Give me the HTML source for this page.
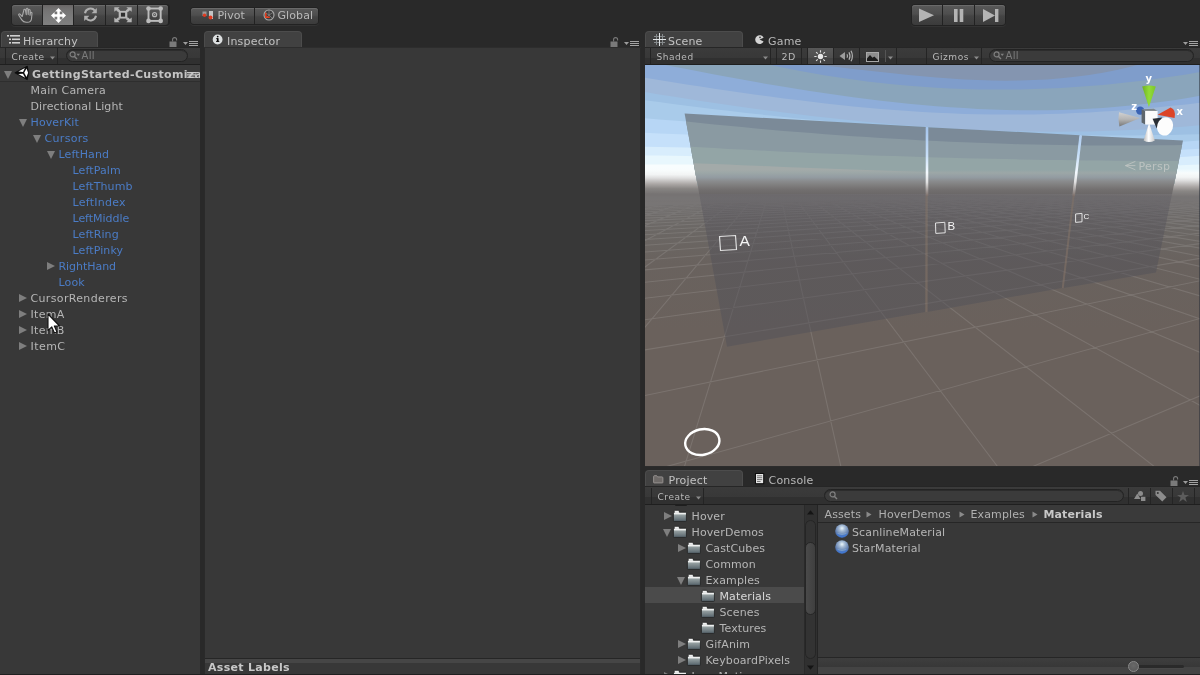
<!DOCTYPE html>
<html>
<head>
<meta charset="utf-8">
<title>Unity Editor</title>
<style>
*{box-sizing:border-box;margin:0;padding:0}
html,body{width:1200px;height:675px;overflow:hidden;background:#292929}
body{font-family:"DejaVu Sans","Liberation Sans",sans-serif;font-size:11px;color:#b6b6b6;position:relative;letter-spacing:0.12px}
.abs{position:absolute}
svg{position:absolute;overflow:visible}
.panel{position:absolute;background:#383838}
.tab{position:absolute;height:17px;background:#414141;border:1px solid #4c4c4c;border-bottom:none;border-radius:4px 4px 0 0}
.tl{position:absolute;font-size:11px;line-height:16px;height:16px;color:#c2c2c2;white-space:nowrap;letter-spacing:0.2px}
.tbar{position:absolute;height:18px;background:linear-gradient(#3b3b3b 0,#383838 60%,#303030 61%,#303030 100%);border-top:1px solid #262626;border-bottom:1px solid #1f1f1f}
.tt{position:absolute;font-size:9px;line-height:12px;height:12px;color:#b9b9b9;white-space:nowrap;letter-spacing:0.55px}
.sep{position:absolute;width:1px;background:#242424}
.t{position:absolute;white-space:nowrap;line-height:16px;height:16px}
.b{color:#4b7cc6}
.bold{font-weight:bold}
.search{position:absolute;height:13px;border-radius:7px;background:#3b3b3b;border:1px solid #232323;box-shadow:inset 0 1px 0 #2c2c2c}
.tri-d{position:absolute;width:0;height:0;border-left:4.5px solid transparent;border-right:4.5px solid transparent;border-top:8px solid #7e7e7e}
.tri-r{position:absolute;width:0;height:0;border-top:4.5px solid transparent;border-bottom:4.5px solid transparent;border-left:8px solid #7e7e7e}
.btng{position:absolute;border-radius:4px;background:#222222;box-shadow:0 1px 0 #333}
.btn{position:absolute;top:1px;bottom:1px;background:linear-gradient(#595959 0,#4e4e4e 45%,#444444 55%,#3b3b3b 100%);box-shadow:inset 0 1px 0 #6a6a6a}
.btn.on{background:linear-gradient(#6a6767 0,#737272 20%,#797979 50%,#808080 100%);box-shadow:none}

#root{position:absolute;left:0;top:0;width:1200px;height:675px;will-change:transform;transform:translateZ(0)}

#bline{position:absolute;left:0;top:674px;width:1200px;height:1px;background:#202020}

</style>
</head>
<body>
<div id="root">
<div class="btng" style="left:11px;top:4px;width:159px;height:22px">
<div class="btn" style="left:1px;width:30px;border-radius:3px 0 0 3px;"></div>
<div class="btn on" style="left:32px;width:30px;"></div>
<div class="btn" style="left:63px;width:31px;"></div>
<div class="btn" style="left:95px;width:31px;"></div>
<div class="btn" style="left:127px;width:30px;border-radius:0 3px 3px 0;"></div>
</div>
<svg style="left:17px;top:6px" width="18" height="18" viewBox="0 0 18 18"><path d="M5.2 10.5 3 8.2c-.7-.7-1.8.2-1.2 1.1l3 4.6c1 1.6 2.3 2.4 4.3 2.4h1.4c2.3 0 3.8-1.6 4-3.6l.5-5.400c.1-1.100-1.400-1.300-1.600-.2l-.4 2.200.2-5c0-1.100-1.600-1.200-1.700-.1l-.3 4.300-.3-5.400c-.1-1.100-1.700-1-1.700.1l.1 5.400-.9-4.600c-.2-1.100-1.800-.8-1.600.3z" fill="none" stroke="#a8a8a8" stroke-width="1.1" stroke-linejoin="round"/></svg>
<svg style="left:50.800px;top:7.700px" width="15" height="15" viewBox="0 0 15 15"><path d="M7.500 0 10.900 3.600H8.750V6.250H11.400V4.100L15 7.500 11.400 10.900V8.750H8.750V11.400H10.900L7.500 15 4.100 11.400H6.250V8.750H3.600V10.900L0 7.500 3.600 4.100V6.250H6.250V3.600H4.100z" fill="#ffffff"/></svg>
<svg style="left:83px;top:7px" width="15" height="15" viewBox="0 0 15 15"><path d="M2 6.200A5.600 5.600 0 0 1 11.800 3.600" fill="none" stroke="#b0b0b0" stroke-width="2"/><path d="M13.800 1V6.200H8.600z" fill="#b0b0b0"/><path d="M13 8.800A5.600 5.600 0 0 1 3.200 11.400" fill="none" stroke="#b0b0b0" stroke-width="2"/><path d="M1.200 14V8.800H6.400z" fill="#b0b0b0"/></svg>
<svg style="left:113.500px;top:7px" width="18" height="15.400" viewBox="0 0 18 18" preserveAspectRatio="none"><rect x="5.800" y="5.600" width="6.400" height="6.800" fill="#2e2e2e" stroke="#b8b8b8" stroke-width="2.200"/><g fill="#b4b4b4"><path d="M0.300 0.300h5.400L4.100 1.900 6.300 4.100 4.300 6.100 2.100 3.900 0.300 5.700z"/><path d="M17.700 0.300v5.400L15.900 3.900 13.700 6.100 11.700 4.100 13.900 1.900 12.300 0.300z"/><path d="M0.300 17.700v-5.400L2.100 14.100 4.300 11.900 6.300 13.900 4.100 16.100 5.700 17.700z"/><path d="M17.700 17.700h-5.400L13.900 16.100 11.700 13.900 13.700 11.900 15.900 14.100 17.700 12.300z"/></g></svg>
<svg style="left:145.800px;top:5.800px" width="17.200" height="17.400" viewBox="0 0 17.200 17.400"><rect x="2.500" y="2.500" width="12.200" height="12.400" fill="none" stroke="#bcbcbc" stroke-width="1.900"/><g fill="#bcbcbc"><circle cx="2.500" cy="2.500" r="2.300"/><circle cx="14.700" cy="2.500" r="2.300"/><circle cx="2.500" cy="14.900" r="2.300"/><circle cx="14.700" cy="14.900" r="2.300"/></g><circle cx="8.600" cy="8.700" r="2" fill="none" stroke="#b4b4b4" stroke-width="1.300"/><circle cx="8.600" cy="8.700" r="0.600" fill="#b4b4b4"/></svg>
<div class="btng" style="left:190px;top:7px;width:129px;height:18px">
<div class="btn" style="left:1px;width:63px;border-radius:3px 0 0 3px"></div>
<div class="btn" style="left:65px;width:63px;border-radius:0 3px 3px 0"></div>
</div>
<svg style="left:202px;top:11px" width="12" height="9" viewBox="0 0 12 9"><rect x="0.500" y="0.500" width="4" height="4.500" fill="#9a9a9a"/><rect x="7" y="0" width="4" height="8" fill="#c4c4c4"/><circle cx="2.500" cy="4.300" r="1.700" fill="#e03a20"/><circle cx="8.500" cy="6.500" r="2" fill="#e03a20"/></svg>
<div class="t" style="left:217.500px;top:8px;color:#b9b9b9;letter-spacing:0.1px">Pivot</div>
<svg style="left:263px;top:9px" width="12" height="12" viewBox="0 0 12 12"><circle cx="6" cy="6" r="5" fill="#3c3c3c" stroke="#a8a8a8" stroke-width="1.100"/><path d="M6 1.500V6M2 3.500 6 6 10 3.500M3 9 6 6 9 9" stroke="#8a8a8a" stroke-width="0.700" fill="none"/><path d="M2.800 3.800V8.300H6.800" stroke="#e8401e" stroke-width="1.500" fill="none"/></svg>
<div class="t" style="left:277.500px;top:8px;color:#b9b9b9;letter-spacing:0.1px">Global</div>
<div class="btng" style="left:911px;top:4px;width:95px;height:22px">
<div class="btn" style="left:1px;width:30px;border-radius:3px 0 0 3px"></div>
<div class="btn" style="left:32px;width:31px"></div>
<div class="btn" style="left:64px;width:30px;border-radius:0 3px 3px 0"></div>
</div>
<svg style="left:911px;top:4px" width="95" height="22" viewBox="0 0 95 22"><g fill="#b4b4b4"><path d="M8 4.500V18L23 11.200z"/><rect x="43" y="5" width="3.600" height="13"/><rect x="48.700" y="5" width="3.600" height="13"/><path d="M72 5V18L84 11.500z"/><rect x="84" y="5" width="3.400" height="13"/></g></svg>
<div class="panel" style="left:0;top:47px;width:200px;height:628px"></div>
<div class="tab" style="left:1px;top:31px;width:97px"></div>
<svg style="left:7px;top:35px" width="13" height="9" viewBox="0 0 13 9"><g fill="#d0d0d0"><rect x="0" y="0" width="2" height="1.600"/><rect x="3" y="0" width="10" height="1.600"/><rect x="2" y="3.500" width="2" height="1.600"/><rect x="5" y="3.500" width="8" height="1.600"/><rect x="2" y="7" width="2" height="1.600"/><rect x="5" y="7" width="8" height="1.600"/></g></svg>
<div class="tl" style="left:23px;top:34px">Hierarchy</div>
<svg style="left:169px;top:37px" width="9" height="10" viewBox="0 0 9 10"><rect x="0.5" y="4.5" width="7" height="5.5" fill="#7a7a7a"/><path d="M3.6 4.6V2.6a2 2 0 0 1 4 0V3.4" fill="none" stroke="#7a7a7a" stroke-width="1.1"/></svg>
<svg style="left:183px;top:41px" width="15" height="5" viewBox="0 0 15 5" shape-rendering="crispEdges"><path d="M0 1h5l-2.500 3z" fill="#9c9c9c" shape-rendering="geometricPrecision"/><rect x="6" y="0" width="8.500" height="1" fill="#a4a4a4"/><rect x="6" y="2" width="8.500" height="1" fill="#a4a4a4"/><rect x="6" y="4" width="8.500" height="1" fill="#a4a4a4"/></svg>
<div class="tbar" style="left:0;top:47px;width:200px"></div>
<div class="sep" style="left:5px;top:48px;height:16px"></div>
<div class="tt" style="left:11.500px;top:50.500px">Create</div>
<svg style="left:49.500px;top:55.500px" width="5" height="4" viewBox="0 0 5 4"><path d="M0 0.500h5L2.500 3.500z" fill="#8a8a8a"/></svg>
<div class="sep" style="left:57px;top:48px;height:16px"></div>
<div class="search" style="left:65.500px;top:49px;width:122px"></div>
<svg style="left:69px;top:51px" width="12" height="9" viewBox="0 0 12 9"><circle cx="3.600" cy="3.400" r="2.500" fill="none" stroke="#808080" stroke-width="1.200"/><path d="M5.300 5.200 8 8" stroke="#808080" stroke-width="1.400"/><path d="M7.500 2.800h3.500L9.200 5z" fill="#808080"/></svg>
<div class="tt" style="left:81.500px;top:50px;color:#7c7c7c;font-size:10px;letter-spacing:0.3px">All</div>
<div class="abs" style="left:0;top:65px;width:200px;height:17px;background:#3a3a3a;border-bottom:1px solid #2e2e2e"></div>
<div class="tri-d" style="left:4px;top:70.5px"></div>
<svg style="left:14px;top:65px" width="16" height="16" viewBox="0 0 16 16"><path d="M0.800 7.800 13.300 1.100Q15.600 7.800 13.300 14.700z" fill="#0c0c0c" stroke="#0c0c0c" stroke-width="0.800" stroke-linejoin="round"/><path d="M4.300 6.600 10.900 3 9 7z" fill="#fff"/><path d="M4.300 9.100 9 8.700 11.100 12.800z" fill="#fff"/><path d="M12.500 3.600 14.100 7.800 12.500 12.100 10.200 7.800z" fill="#fff"/></svg>
<div class="t bold" style="left:32px;top:66.500px;color:#c4c4c4;letter-spacing:0.35px;width:168px;overflow:hidden">GettingStarted-Customization</div>
<svg style="left:186.500px;top:72px" width="9" height="6" viewBox="0 0 9 6"><path d="M0 0.600h9M0 2.900h9M0 5.200h9" stroke="#c8c8c8" stroke-width="1.100"/></svg>
<div class="t" style="left:30.5px;top:83px;letter-spacing:0.24px">Main Camera</div>
<div class="t" style="left:30.5px;top:99px">Directional Light</div>
<div class="tri-d" style="left:18.5px;top:118.5px"></div>
<div class="t b" style="left:30.5px;top:115px">HoverKit</div>
<div class="tri-d" style="left:32.5px;top:134.5px"></div>
<div class="t b" style="left:44.5px;top:131px;letter-spacing:0.32px">Cursors</div>
<div class="tri-d" style="left:46.5px;top:150.5px"></div>
<div class="t b" style="left:58.5px;top:147px">LeftHand</div>
<div class="t b" style="left:72.5px;top:163px">LeftPalm</div>
<div class="t b" style="left:72.5px;top:179px">LeftThumb</div>
<div class="t b" style="left:72.5px;top:195px;letter-spacing:0.26px">LeftIndex</div>
<div class="t b" style="left:72.5px;top:211px;letter-spacing:-0.04px">LeftMiddle</div>
<div class="t b" style="left:72.5px;top:227px">LeftRing</div>
<div class="t b" style="left:72.5px;top:243px">LeftPinky</div>
<div class="tri-r" style="left:47.0px;top:261.5px"></div>
<div class="t b" style="left:58.5px;top:259px;letter-spacing:-0.05px">RightHand</div>
<div class="t b" style="left:58.5px;top:275px">Look</div>
<div class="tri-r" style="left:19.0px;top:293.5px"></div>
<div class="t" style="left:30.5px;top:291px;letter-spacing:0.35px">CursorRenderers</div>
<div class="tri-r" style="left:19.0px;top:309.5px"></div>
<div class="t" style="left:30.5px;top:307px;letter-spacing:0.3px">ItemA</div>
<div class="tri-r" style="left:19.0px;top:325.5px"></div>
<div class="t" style="left:30.5px;top:323px;letter-spacing:0.3px">ItemB</div>
<div class="tri-r" style="left:19.0px;top:341.5px"></div>
<div class="t" style="left:30.5px;top:339px;letter-spacing:0.45px">ItemC</div>
<svg style="left:47px;top:313px" width="14" height="21" viewBox="0 0 14 21"><path d="M1 1V17.500L4.800 13.900 7.500 20 10 18.900 7.300 13H12.500z" fill="#fff" stroke="#111" stroke-width="1.100" stroke-linejoin="round"/></svg>
<div class="panel" style="left:204px;top:47px;width:437px;height:628px;border-left:1px solid #2a2a2a;border-right:1px solid #2a2a2a"></div>
<div class="tab" style="left:204px;top:31px;width:98px"></div>
<svg style="left:212px;top:34px" width="11" height="11" viewBox="0 0 11 11"><circle cx="5.600" cy="5.500" r="4.900" fill="#dcdfe0"/><rect x="4.900" y="4.200" width="1.700" height="3.400" fill="#0a0a0a"/><rect x="4.200" y="4.200" width="1.800" height="0.900" fill="#0a0a0a"/><rect x="4.100" y="6.900" width="3.200" height="1" fill="#0a0a0a"/><circle cx="5.700" cy="2.600" r="0.900" fill="#0a0a0a"/></svg>
<div class="tl" style="left:227px;top:34px">Inspector</div>
<svg style="left:610px;top:37px" width="9" height="10" viewBox="0 0 9 10"><rect x="0.5" y="4.5" width="7" height="5.5" fill="#7a7a7a"/><path d="M3.6 4.6V2.6a2 2 0 0 1 4 0V3.4" fill="none" stroke="#7a7a7a" stroke-width="1.1"/></svg>
<svg style="left:624px;top:41px" width="15" height="5" viewBox="0 0 15 5" shape-rendering="crispEdges"><path d="M0 1h5l-2.500 3z" fill="#9c9c9c" shape-rendering="geometricPrecision"/><rect x="6" y="0" width="8.500" height="1" fill="#a4a4a4"/><rect x="6" y="2" width="8.500" height="1" fill="#a4a4a4"/><rect x="6" y="4" width="8.500" height="1" fill="#a4a4a4"/></svg>
<div class="abs" style="left:204px;top:47px;width:437px;height:1px;background:#2d2d2d"></div>
<div class="abs" style="left:205px;top:658px;width:435px;height:1px;background:#262626"></div>
<div class="abs" style="left:205px;top:659px;width:435px;height:4px;background:#464646"></div>
<div class="t bold" style="left:208px;top:660px;color:#c8c8c8;letter-spacing:0.3px">Asset Labels</div>
<div class="panel" style="left:645px;top:47px;width:555px;height:420px;background:#2c2c2c"></div>
<div class="tab" style="left:645px;top:31px;width:98px"></div>
<svg style="left:653px;top:33px" width="13" height="13" viewBox="0 0 13 13" shape-rendering="crispEdges"><g fill="#868a8c"><rect x="3" y="1" width="1" height="11"/><rect x="9" y="1" width="1" height="11"/><rect x="1" y="3" width="11" height="1"/><rect x="1" y="9" width="11" height="1"/></g><g fill="#e2e6e8"><rect x="6" y="0" width="1" height="13"/><rect x="0" y="6" width="13" height="1"/></g></svg>
<div class="tl" style="left:668px;top:34px">Scene</div>
<svg style="left:754.800px;top:35px" width="9.200" height="9.200" viewBox="0 0 11 11"><path d="M5.500 5.500 10.300 3.200A5.300 5.300 0 1 0 10.300 7.800z" fill="#d4d4d4"/><circle cx="6" cy="2.800" r="1" fill="#333"/></svg>
<div class="tl" style="left:768px;top:34px;color:#b8b8b8">Game</div>
<svg style="left:1183px;top:41px" width="15" height="5" viewBox="0 0 15 5" shape-rendering="crispEdges"><path d="M0 1h5l-2.500 3z" fill="#9c9c9c" shape-rendering="geometricPrecision"/><rect x="6" y="0" width="8.500" height="1" fill="#a4a4a4"/><rect x="6" y="2" width="8.500" height="1" fill="#a4a4a4"/><rect x="6" y="4" width="8.500" height="1" fill="#a4a4a4"/></svg>
<div class="tbar" style="left:645px;top:47px;width:555px"></div>
<div class="sep" style="left:650px;top:48px;height:16px"></div>
<div class="tt" style="left:656.500px;top:50.500px">Shaded</div>
<svg style="left:763px;top:55.500px" width="5" height="4" viewBox="0 0 5 4"><path d="M0 0.500h5L2.500 3.500z" fill="#8a8a8a"/></svg>
<div class="sep" style="left:770px;top:48px;height:16px"></div>
<div class="sep" style="left:776px;top:48px;height:16px"></div>
<div class="tt" style="left:781.500px;top:50.500px;font-size:9.500px">2D</div>
<div class="sep" style="left:801px;top:48px;height:16px"></div>
<div class="sep" style="left:807px;top:48px;height:16px"></div>
<div class="abs" style="left:808px;top:48px;width:25px;height:16px;background:linear-gradient(#585858 0,#4e4e4e 60%,#444 61%,#444 100%)"></div>
<div class="sep" style="left:833px;top:48px;height:16px"></div>
<svg style="left:814px;top:50px" width="13" height="13" viewBox="0 0 13 13"><circle cx="6.500" cy="6.500" r="2.700" fill="#e8e8e8"/><path d="M6.500 0.300V2.600M6.500 10.400V12.700M0.300 6.500H2.600M10.400 6.500H12.700M2.100 2.100 3.700 3.700M9.300 9.300 10.900 10.900M10.900 2.100 9.300 3.700M3.700 9.300 2.100 10.900" stroke="#e0e0e0" stroke-width="1.100"/></svg>
<svg style="left:839px;top:50px" width="15" height="12" viewBox="0 0 15 12"><path d="M0.500 6 6 2V10z" fill="#9c9c9c"/><path d="M5 3.500V8.500" stroke="#9c9c9c" stroke-width="1"/><path d="M8 4.200Q9 6 8 7.800" fill="none" stroke="#b0b0b0" stroke-width="1.100"/><path d="M10 2.200Q12 6 10 9.800" fill="none" stroke="#b0b0b0" stroke-width="1.200"/><path d="M12 0.700Q14.800 6 12 11.300" fill="none" stroke="#b0b0b0" stroke-width="1.200"/></svg>
<div class="sep" style="left:859px;top:48px;height:16px"></div>
<svg style="left:866px;top:51.500px" width="13" height="10" viewBox="0 0 13 10"><rect x="0.500" y="0.500" width="12" height="9" fill="#8e8e8e" stroke="#a8a8a8" stroke-width="1"/><path d="M1 9V6.500L4 3 6.500 5.800 8.300 4.500 12 8V9z" fill="#1c1c1c"/></svg>
<div class="sep" style="left:885px;top:50px;height:12px;background:#555"></div>
<svg style="left:888px;top:55.500px" width="5" height="4" viewBox="0 0 5 4"><path d="M0 0.500h5L2.500 3.500z" fill="#8a8a8a"/></svg>
<div class="sep" style="left:896px;top:48px;height:16px"></div>
<div class="sep" style="left:926px;top:48px;height:16px"></div>
<div class="tt" style="left:932.500px;top:50.500px">Gizmos</div>
<svg style="left:974px;top:55.500px" width="5" height="4" viewBox="0 0 5 4"><path d="M0 0.500h5L2.500 3.500z" fill="#8a8a8a"/></svg>
<div class="sep" style="left:981px;top:48px;height:16px"></div>
<div class="search" style="left:989px;top:49px;width:205px"></div>
<svg style="left:993px;top:51px" width="12" height="9" viewBox="0 0 12 9"><circle cx="3.600" cy="3.400" r="2.500" fill="none" stroke="#808080" stroke-width="1.200"/><path d="M5.300 5.200 8 8" stroke="#808080" stroke-width="1.400"/><path d="M7.500 2.800h3.500L9.200 5z" fill="#808080"/></svg>
<div class="tt" style="left:1005.500px;top:50px;color:#7c7c7c;font-size:10px;letter-spacing:0.3px">All</div>
<div class="panel" style="left:645px;top:487px;width:555px;height:188px"></div>
<svg width="0" height="0" style="left:0;top:0"><defs><linearGradient id="fg" x1="0" y1="0" x2="0" y2="1"><stop offset="0" stop-color="#eeeeee"/><stop offset="0.220" stop-color="#d2d6d6"/><stop offset="0.380" stop-color="#9aa4a5"/><stop offset="1" stop-color="#54626a"/></linearGradient><radialGradient id="sg" cx="0.500" cy="0.300" r="0.700"><stop offset="0" stop-color="#eaf6fb"/><stop offset="0.300" stop-color="#a4bad4"/><stop offset="0.650" stop-color="#6c88b4"/><stop offset="1" stop-color="#3c62a8"/></radialGradient></defs></svg>
<div class="tab" style="left:645px;top:470px;width:98px"></div>
<svg style="left:653px;top:474.500px" width="10.500" height="8.500" viewBox="0 0 11 9"><path d="M0.600 7.900V1.700Q0.600 0.700 1.600 0.700H3.800L4.800 2H9.400Q10.400 2 10.400 3V7.900Q10.400 8.400 9.900 8.400H1.100Q0.600 8.400 0.600 7.900z" fill="#6e6a68" stroke="#9e9a98" stroke-width="0.900"/></svg>
<div class="tl" style="left:668.500px;top:473px">Project</div>
<svg style="left:755px;top:473px" width="9" height="11" viewBox="0 0 9 11"><rect x="0.500" y="0.500" width="8.200" height="10.200" fill="#e6e6e6" stroke="#0e0e0e" stroke-width="1"/><path d="M2 2.800h5.200M2 4.700h5.200M2 6.600h5.200M2 8.500h3.600" stroke="#6a6a6a" stroke-width="0.900"/></svg>
<div class="tl" style="left:768.500px;top:473px;color:#b8b8b8">Console</div>
<svg style="left:1169.5px;top:476px" width="9" height="10" viewBox="0 0 9 10"><rect x="0.5" y="4.5" width="7" height="5.5" fill="#7a7a7a"/><path d="M3.6 4.6V2.6a2 2 0 0 1 4 0V3.4" fill="none" stroke="#7a7a7a" stroke-width="1.1"/></svg>
<svg style="left:1183px;top:480px" width="15" height="5" viewBox="0 0 15 5" shape-rendering="crispEdges"><path d="M0 1h5l-2.500 3z" fill="#9c9c9c" shape-rendering="geometricPrecision"/><rect x="6" y="0" width="8.500" height="1" fill="#a4a4a4"/><rect x="6" y="2" width="8.500" height="1" fill="#a4a4a4"/><rect x="6" y="4" width="8.500" height="1" fill="#a4a4a4"/></svg>
<div class="tbar" style="left:645px;top:486px;width:555px;height:19px"></div>
<div class="sep" style="left:651px;top:488px;height:16px"></div>
<div class="tt" style="left:657.500px;top:490.500px">Create</div>
<svg style="left:695.500px;top:495.500px" width="5" height="4" viewBox="0 0 5 4"><path d="M0 0.500h5L2.500 3.500z" fill="#8a8a8a"/></svg>
<div class="sep" style="left:703px;top:488px;height:16px"></div>
<div class="search" style="left:824px;top:489px;width:300px"></div>
<svg style="left:829px;top:491px" width="9" height="9" viewBox="0 0 9 9"><circle cx="3.600" cy="3.400" r="2.500" fill="none" stroke="#808080" stroke-width="1.200"/><path d="M5.300 5.200 8 8" stroke="#808080" stroke-width="1.400"/></svg>
<div class="sep" style="left:1128px;top:488px;height:16px"></div>
<div class="sep" style="left:1150px;top:488px;height:16px"></div>
<div class="sep" style="left:1172px;top:488px;height:16px"></div>
<div class="sep" style="left:1194px;top:488px;height:16px"></div>
<svg style="left:1134px;top:491px" width="12" height="10" viewBox="0 0 12 10"><circle cx="6.500" cy="2.600" r="2.500" fill="#8c8c8c"/><path d="M0 8 3.300 2.500 6.600 8z" fill="#8c8c8c"/><rect x="7" y="5.800" width="4.400" height="4.200" fill="#8c8c8c"/></svg>
<svg style="left:1155px;top:490px" width="12" height="12" viewBox="0 0 12 12"><path d="M0.500 0.800H5L11.500 7.300 7.300 11.500 0.500 5z" fill="#8c8c8c"/><circle cx="2.800" cy="3" r="1" fill="#333"/></svg>
<svg style="left:1177px;top:490.500px" width="12" height="11" viewBox="0 0 12 11"><path d="M6 0 7.500 4H12L8.400 6.600 9.800 11 6 8.300 2.200 11 3.600 6.600 0 4H4.500z" fill="#5c5c5c"/></svg>
<div class="abs" style="left:645px;top:505px;width:159px;height:170px;overflow:hidden">
<div class="abs" style="left:0;top:82px;width:159px;height:16px;background:#4b4b4b"></div>
<div class="abs" style="left:29.500px;top:-1px;width:12px;height:2px;background:#1e1e1e;border-radius:0 0 1px 1px"></div>
<div class="tri-r" style="left:18.5px;top:6.5px"></div>
<svg style="left:28px;top:5px" width="14" height="12" viewBox="0 0 14 12"><path d="M1.300 0.800Q1.300 0.300 1.900 0.300H5.200Q5.800 0.300 6 0.900L6.400 2.200H12.600Q13.400 2.200 13.400 3V10.600Q13.400 11.400 12.600 11.400H1.200Q0.400 11.400 0.400 10.600V3.200Q0.400 2.600 1.300 2.400z" fill="url(#fg)" stroke="#202020" stroke-width="0.800"/><path d="M1.800 0.900H5.300L5.800 2.500H1.800z" fill="#f0f0f0"/><path d="M1 3.600H12.900" stroke="#f4f6f6" stroke-width="1"/><path d="M1 4.500H12.900" stroke="#c4caca" stroke-width="0.800"/></svg>
<div class="t" style="left:46.5px;top:4px;color:#b6b6b6">Hover</div>
<div class="tri-d" style="left:18px;top:23.5px"></div>
<svg style="left:28px;top:21px" width="14" height="12" viewBox="0 0 14 12"><path d="M1.300 0.800Q1.300 0.300 1.900 0.300H5.200Q5.800 0.300 6 0.900L6.400 2.200H12.600Q13.400 2.200 13.400 3V10.600Q13.400 11.400 12.600 11.400H1.200Q0.400 11.400 0.400 10.600V3.200Q0.400 2.600 1.300 2.400z" fill="url(#fg)" stroke="#202020" stroke-width="0.800"/><path d="M1.800 0.900H5.300L5.800 2.500H1.800z" fill="#f0f0f0"/><path d="M1 3.600H12.900" stroke="#f4f6f6" stroke-width="1"/><path d="M1 4.500H12.900" stroke="#c4caca" stroke-width="0.800"/></svg>
<div class="t" style="left:46.5px;top:20px;color:#b6b6b6">HoverDemos</div>
<div class="tri-r" style="left:32.5px;top:38.5px"></div>
<svg style="left:42px;top:37px" width="14" height="12" viewBox="0 0 14 12"><path d="M1.300 0.800Q1.300 0.300 1.900 0.300H5.200Q5.800 0.300 6 0.900L6.400 2.200H12.600Q13.400 2.200 13.400 3V10.600Q13.400 11.400 12.600 11.400H1.200Q0.400 11.400 0.400 10.600V3.200Q0.400 2.600 1.300 2.400z" fill="url(#fg)" stroke="#202020" stroke-width="0.800"/><path d="M1.800 0.900H5.300L5.800 2.500H1.800z" fill="#f0f0f0"/><path d="M1 3.600H12.900" stroke="#f4f6f6" stroke-width="1"/><path d="M1 4.500H12.900" stroke="#c4caca" stroke-width="0.800"/></svg>
<div class="t" style="left:60.5px;top:36px;color:#b6b6b6">CastCubes</div>
<svg style="left:42px;top:53px" width="14" height="12" viewBox="0 0 14 12"><path d="M1.300 0.800Q1.300 0.300 1.900 0.300H5.200Q5.800 0.300 6 0.900L6.400 2.200H12.600Q13.400 2.200 13.400 3V10.600Q13.400 11.400 12.600 11.400H1.200Q0.400 11.400 0.400 10.600V3.200Q0.400 2.600 1.300 2.400z" fill="url(#fg)" stroke="#202020" stroke-width="0.800"/><path d="M1.800 0.900H5.300L5.800 2.500H1.800z" fill="#f0f0f0"/><path d="M1 3.600H12.900" stroke="#f4f6f6" stroke-width="1"/><path d="M1 4.500H12.900" stroke="#c4caca" stroke-width="0.800"/></svg>
<div class="t" style="left:60.5px;top:52px;color:#b6b6b6">Common</div>
<div class="tri-d" style="left:32px;top:71.5px"></div>
<svg style="left:42px;top:69px" width="14" height="12" viewBox="0 0 14 12"><path d="M1.300 0.800Q1.300 0.300 1.900 0.300H5.200Q5.800 0.300 6 0.900L6.400 2.200H12.600Q13.400 2.200 13.400 3V10.600Q13.400 11.400 12.600 11.400H1.200Q0.400 11.400 0.400 10.600V3.200Q0.400 2.600 1.300 2.400z" fill="url(#fg)" stroke="#202020" stroke-width="0.800"/><path d="M1.800 0.900H5.300L5.800 2.500H1.800z" fill="#f0f0f0"/><path d="M1 3.600H12.900" stroke="#f4f6f6" stroke-width="1"/><path d="M1 4.500H12.900" stroke="#c4caca" stroke-width="0.800"/></svg>
<div class="t" style="left:60.5px;top:68px;color:#b6b6b6">Examples</div>
<svg style="left:56px;top:85px" width="14" height="12" viewBox="0 0 14 12"><path d="M1.300 0.800Q1.300 0.300 1.900 0.300H5.200Q5.800 0.300 6 0.900L6.400 2.200H12.600Q13.400 2.200 13.400 3V10.600Q13.400 11.400 12.600 11.400H1.200Q0.400 11.400 0.400 10.600V3.200Q0.400 2.600 1.300 2.400z" fill="url(#fg)" stroke="#202020" stroke-width="0.800"/><path d="M1.800 0.900H5.300L5.800 2.500H1.800z" fill="#f0f0f0"/><path d="M1 3.600H12.900" stroke="#f4f6f6" stroke-width="1"/><path d="M1 4.500H12.900" stroke="#c4caca" stroke-width="0.800"/></svg>
<div class="t" style="left:74.5px;top:84px;color:#d8d8d8">Materials</div>
<svg style="left:56px;top:101px" width="14" height="12" viewBox="0 0 14 12"><path d="M1.300 0.800Q1.300 0.300 1.900 0.300H5.200Q5.800 0.300 6 0.900L6.400 2.200H12.600Q13.400 2.200 13.400 3V10.600Q13.400 11.400 12.600 11.400H1.200Q0.400 11.400 0.400 10.600V3.200Q0.400 2.600 1.300 2.400z" fill="url(#fg)" stroke="#202020" stroke-width="0.800"/><path d="M1.800 0.900H5.300L5.800 2.500H1.800z" fill="#f0f0f0"/><path d="M1 3.600H12.900" stroke="#f4f6f6" stroke-width="1"/><path d="M1 4.500H12.900" stroke="#c4caca" stroke-width="0.800"/></svg>
<div class="t" style="left:74.5px;top:100px;color:#b6b6b6">Scenes</div>
<svg style="left:56px;top:117px" width="14" height="12" viewBox="0 0 14 12"><path d="M1.300 0.800Q1.300 0.300 1.900 0.300H5.200Q5.800 0.300 6 0.900L6.400 2.200H12.600Q13.400 2.200 13.400 3V10.600Q13.400 11.400 12.600 11.400H1.200Q0.400 11.400 0.400 10.600V3.200Q0.400 2.600 1.300 2.400z" fill="url(#fg)" stroke="#202020" stroke-width="0.800"/><path d="M1.800 0.900H5.300L5.800 2.500H1.800z" fill="#f0f0f0"/><path d="M1 3.600H12.900" stroke="#f4f6f6" stroke-width="1"/><path d="M1 4.500H12.900" stroke="#c4caca" stroke-width="0.800"/></svg>
<div class="t" style="left:74.5px;top:116px;color:#b6b6b6">Textures</div>
<div class="tri-r" style="left:32.5px;top:134.5px"></div>
<svg style="left:42px;top:133px" width="14" height="12" viewBox="0 0 14 12"><path d="M1.300 0.800Q1.300 0.300 1.900 0.300H5.200Q5.800 0.300 6 0.900L6.400 2.200H12.600Q13.400 2.200 13.400 3V10.600Q13.400 11.400 12.600 11.400H1.200Q0.400 11.400 0.400 10.600V3.200Q0.400 2.600 1.300 2.400z" fill="url(#fg)" stroke="#202020" stroke-width="0.800"/><path d="M1.800 0.900H5.300L5.800 2.500H1.800z" fill="#f0f0f0"/><path d="M1 3.600H12.900" stroke="#f4f6f6" stroke-width="1"/><path d="M1 4.500H12.900" stroke="#c4caca" stroke-width="0.800"/></svg>
<div class="t" style="left:60.5px;top:132px;color:#b6b6b6">GifAnim</div>
<div class="tri-r" style="left:32.5px;top:150.5px"></div>
<svg style="left:42px;top:149px" width="14" height="12" viewBox="0 0 14 12"><path d="M1.300 0.800Q1.300 0.300 1.900 0.300H5.200Q5.800 0.300 6 0.900L6.400 2.200H12.600Q13.400 2.200 13.400 3V10.600Q13.400 11.400 12.600 11.400H1.200Q0.400 11.400 0.400 10.600V3.200Q0.400 2.600 1.300 2.400z" fill="url(#fg)" stroke="#202020" stroke-width="0.800"/><path d="M1.800 0.900H5.300L5.800 2.500H1.800z" fill="#f0f0f0"/><path d="M1 3.600H12.900" stroke="#f4f6f6" stroke-width="1"/><path d="M1 4.500H12.900" stroke="#c4caca" stroke-width="0.800"/></svg>
<div class="t" style="left:60.5px;top:148px;color:#b6b6b6">KeyboardPixels</div>
<div class="tri-r" style="left:18.5px;top:166.5px"></div>
<svg style="left:28px;top:165px" width="14" height="12" viewBox="0 0 14 12"><path d="M1.300 0.800Q1.300 0.300 1.900 0.300H5.200Q5.800 0.300 6 0.900L6.400 2.200H12.600Q13.400 2.200 13.400 3V10.600Q13.400 11.400 12.600 11.400H1.200Q0.400 11.400 0.400 10.600V3.200Q0.400 2.600 1.300 2.400z" fill="url(#fg)" stroke="#202020" stroke-width="0.800"/><path d="M1.800 0.900H5.300L5.800 2.500H1.800z" fill="#f0f0f0"/><path d="M1 3.600H12.900" stroke="#f4f6f6" stroke-width="1"/><path d="M1 4.500H12.900" stroke="#c4caca" stroke-width="0.800"/></svg>
<div class="t" style="left:46.5px;top:164px;color:#b6b6b6">LeapMotion</div>
</div>
<div class="abs" style="left:804px;top:505px;width:13px;height:170px;background:#303030;border-left:1px solid #2a2a2a"></div>
<svg style="left:807px;top:509.500px" width="7" height="5" viewBox="0 0 9 6"><path d="M0 5.500h9L4.500 0z" fill="#141414"/></svg>
<svg style="left:807px;top:664.500px" width="7" height="5" viewBox="0 0 9 6"><path d="M0 0.500h9L4.500 6z" fill="#141414"/></svg>
<div class="abs" style="left:805px;top:520px;width:11px;height:139px;border-radius:5.500px;background:#333333;border:1px solid #252525"></div>
<div class="abs" style="left:805px;top:542px;width:11px;height:73px;border-radius:5.500px;background:linear-gradient(90deg,#4a4a4a,#3f3f3f);border:1px solid #262626"></div>
<div class="abs" style="left:817px;top:505px;width:1px;height:170px;background:#242424"></div>
<div class="abs" style="left:818px;top:505px;width:382px;height:18px;background:#3a3a3a;border-bottom:1px solid #262626"></div>
<div class="t" style="left:824.5px;top:506.500px;color:#b0b0b0">Assets</div>
<div class="t" style="left:878.5px;top:506.500px;color:#b0b0b0">HoverDemos</div>
<div class="t" style="left:970.5px;top:506.500px;color:#b0b0b0">Examples</div>
<div class="t bold" style="left:1043.5px;top:506.500px;color:#c8c8c8">Materials</div>
<svg style="left:866px;top:511px" width="6" height="7" viewBox="0 0 6 7"><path d="M0.500 0.500V6.500L5.500 3.500z" fill="#8a8a8a"/></svg>
<svg style="left:958.5px;top:511px" width="6" height="7" viewBox="0 0 6 7"><path d="M0.500 0.500V6.500L5.500 3.500z" fill="#8a8a8a"/></svg>
<svg style="left:1032px;top:511px" width="6" height="7" viewBox="0 0 6 7"><path d="M0.500 0.500V6.500L5.500 3.500z" fill="#8a8a8a"/></svg>
<svg style="left:835px;top:523.5px" width="14" height="14" viewBox="0 0 14 14"><circle cx="7" cy="7" r="6.800" fill="url(#sg)"/><path d="M1.600 9.600Q7 13.400 12.400 9.600Q11 13.300 7 13.500Q3 13.300 1.600 9.600z" fill="#3f78d4" opacity="0.900"/><path d="M2.600 9.400Q7 11.600 11.400 9.400" stroke="#7fb0e6" stroke-width="0.700" fill="none" opacity="0.800"/></svg>
<div class="t" style="left:852px;top:524.500px">ScanlineMaterial</div>
<svg style="left:835px;top:539.5px" width="14" height="14" viewBox="0 0 14 14"><circle cx="7" cy="7" r="6.800" fill="url(#sg)"/><path d="M1.600 9.600Q7 13.400 12.400 9.600Q11 13.300 7 13.500Q3 13.300 1.600 9.600z" fill="#3f78d4" opacity="0.900"/><path d="M2.600 9.400Q7 11.600 11.400 9.400" stroke="#7fb0e6" stroke-width="0.700" fill="none" opacity="0.800"/></svg>
<div class="t" style="left:852px;top:540.500px">StarMaterial</div>
<div class="abs" style="left:818px;top:657px;width:382px;height:1px;background:#262626"></div>
<div class="abs" style="left:818px;top:658px;width:382px;height:17px;background:linear-gradient(#3e3e3e,#383838 50%,#444 51%,#444)"></div>
<div class="abs" style="left:1136px;top:664.500px;width:48px;height:3px;border-radius:1.500px;background:#2a2a2a;box-shadow:0 1px 0 #484848"></div>
<div class="abs" style="left:1128px;top:660.500px;width:11px;height:11px;border-radius:50%;background:radial-gradient(circle at 50% 40%,#6a6a6a,#565656);border:1px solid #8a8a8a"></div>
<svg style="left:645px;top:65px;overflow:hidden" width="555" height="401" viewBox="645 65 555 401">
<defs>
<linearGradient id="fog" gradientUnits="userSpaceOnUse" x1="922.500" y1="167.500" x2="922.360" y2="195.500">
<stop offset="0" stop-color="#f8fdfe" stop-opacity="0"/><stop offset="0.150" stop-color="#f8fcfc"/><stop offset="0.300" stop-color="#f2f4f4"/><stop offset="0.420" stop-color="#dedede"/><stop offset="0.520" stop-color="#c6c4c3"/><stop offset="0.640" stop-color="#aaa6a4"/><stop offset="0.800" stop-color="#888583"/><stop offset="1" stop-color="#737070"/></linearGradient>
<linearGradient id="pfog" gradientUnits="userSpaceOnUse" x1="0" y1="170" x2="0" y2="194">
<stop offset="0" stop-color="#9ca7a7" stop-opacity="0"/><stop offset="0.120" stop-color="#9ca7a7"/><stop offset="0.300" stop-color="#939ca2"/><stop offset="0.460" stop-color="#8a8c8e"/><stop offset="0.620" stop-color="#807f7f"/><stop offset="0.820" stop-color="#726f6f"/><stop offset="1" stop-color="#6b6868"/></linearGradient>
<linearGradient id="gfade" gradientUnits="userSpaceOnUse" x1="0" y1="188" x2="0" y2="268">
<stop offset="0" stop-color="#fff" stop-opacity="0"/><stop offset="0.100" stop-color="#fff" stop-opacity="0.250"/><stop offset="0.250" stop-color="#fff" stop-opacity="0.600"/><stop offset="0.550" stop-color="#fff" stop-opacity="0.900"/><stop offset="1" stop-color="#fff" stop-opacity="1"/></linearGradient>
<linearGradient id="pov" gradientUnits="userSpaceOnUse" x1="0" y1="193" x2="0" y2="255">
<stop offset="0" stop-color="#52505a" stop-opacity="0.260"/><stop offset="0.400" stop-color="#525059" stop-opacity="0.410"/><stop offset="1" stop-color="#525158" stop-opacity="0.500"/></linearGradient>
<mask id="gm" maskUnits="userSpaceOnUse" x="645" y="65" width="555" height="401"><rect x="645" y="65" width="555" height="401" fill="url(#gfade)"/></mask>
<linearGradient id="seam" gradientUnits="userSpaceOnUse" x1="0" y1="127" x2="0" y2="196">
<stop offset="0" stop-color="#a4c4ec"/><stop offset="0.4" stop-color="#c6def8"/><stop offset="0.66" stop-color="#f4faff"/><stop offset="0.8" stop-color="#e0e0e0"/><stop offset="0.92" stop-color="#a09a98"/><stop offset="1" stop-color="#7c6e69"/></linearGradient>
<linearGradient id="gnd" gradientUnits="userSpaceOnUse" x1="0" y1="196" x2="0" y2="466">
<stop offset="0" stop-color="#737070"/><stop offset="0.050" stop-color="#6f6c6b"/><stop offset="0.130" stop-color="#6b6764"/><stop offset="0.250" stop-color="#69625e"/><stop offset="0.500" stop-color="#6a615c"/><stop offset="1" stop-color="#6a615c"/></linearGradient>

<clipPath id="pc"><polygon points="684.6,113.5 926.0,127.0 925.3,312.0 727.0,346.7"/><polygon points="928.0,127.2 1080.0,135.2 1062.0,288.0 927.3,312.0"/><polygon points="1081.5,135.4 1183.0,140.5 1156.0,272.5 1063.5,288.0"/></clipPath>
</defs>
<rect x="645" y="65" width="555" height="401" fill="url(#gnd)"/>
<path d="M645.0 60.0 L658.9 60.0 L672.8 60.0 L686.6 60.0 L700.5 60.0 L714.4 60.0 L728.2 60.0 L742.1 60.0 L756.0 60.0 L769.9 60.0 L783.8 60.0 L797.6 60.0 L811.5 60.0 L825.4 60.0 L839.2 60.0 L853.1 60.0 L867.0 60.0 L880.9 60.0 L894.8 60.0 L908.6 60.0 L922.5 60.0 L936.4 60.0 L950.2 60.0 L964.1 60.0 L978.0 60.0 L991.9 60.0 L1005.8 60.0 L1019.6 60.0 L1033.5 60.0 L1047.4 60.0 L1061.2 60.0 L1075.1 60.0 L1089.0 60.0 L1102.9 60.0 L1116.8 60.0 L1130.6 60.0 L1144.5 60.0 L1158.4 60.0 L1172.2 60.0 L1186.1 60.0 L1200.0 60.0 L1200 186 L645 186z" fill="#8495b0"/>
<path d="M645.0 60.0 L658.9 60.0 L672.8 60.0 L686.6 60.0 L700.5 60.0 L714.4 60.0 L728.2 60.0 L742.1 60.0 L756.0 60.0 L769.9 60.0 L783.8 61.2 L797.6 62.6 L811.5 64.1 L825.4 65.7 L839.2 67.3 L853.1 68.9 L867.0 70.5 L880.9 72.0 L894.8 73.6 L908.6 75.0 L922.5 76.3 L936.4 77.5 L950.2 78.5 L964.1 79.4 L978.0 80.1 L991.9 80.5 L1005.8 80.7 L1019.6 80.5 L1033.5 80.1 L1047.4 79.4 L1061.2 78.3 L1075.1 76.8 L1089.0 75.0 L1102.9 72.7 L1116.8 69.9 L1130.6 66.7 L1144.5 63.0 L1158.4 60.0 L1172.2 60.0 L1186.1 60.0 L1200.0 60.0 L1200 186 L645 186z" fill="#7f9dcb"/>
<path d="M645.0 60.0 L658.9 60.0 L672.8 60.0 L686.6 60.0 L700.5 60.0 L714.4 60.0 L728.2 60.0 L742.1 60.0 L756.0 61.8 L769.9 64.9 L783.8 67.8 L797.6 70.6 L811.5 73.1 L825.4 75.5 L839.2 77.6 L853.1 79.6 L867.0 81.4 L880.9 83.0 L894.8 84.5 L908.6 85.7 L922.5 86.8 L936.4 87.7 L950.2 88.5 L964.1 89.0 L978.0 89.4 L991.9 89.6 L1005.8 89.6 L1019.6 89.5 L1033.5 89.1 L1047.4 88.6 L1061.2 88.0 L1075.1 87.1 L1089.0 86.1 L1102.9 85.0 L1116.8 83.6 L1130.6 82.1 L1144.5 80.5 L1158.4 78.6 L1172.2 76.6 L1186.1 74.5 L1200.0 72.1 L1200 186 L645 186z" fill="#8aa5bb"/>
<path d="M645.0 60.9 L658.9 63.7 L672.8 66.4 L686.6 69.1 L700.5 71.8 L714.4 74.5 L728.2 77.1 L742.1 79.6 L756.0 82.1 L769.9 84.5 L783.8 86.8 L797.6 89.1 L811.5 91.3 L825.4 93.3 L839.2 95.3 L853.1 97.2 L867.0 99.0 L880.9 100.7 L894.8 102.3 L908.6 103.7 L922.5 105.0 L936.4 106.2 L950.2 107.3 L964.1 108.1 L978.0 108.9 L991.9 109.5 L1005.8 109.9 L1019.6 110.2 L1033.5 110.3 L1047.4 110.2 L1061.2 109.9 L1075.1 109.4 L1089.0 108.8 L1102.9 107.9 L1116.8 106.8 L1130.6 105.6 L1144.5 104.1 L1158.4 102.3 L1172.2 100.4 L1186.1 98.2 L1200.0 95.8 L1200 186 L645 186z" fill="#8eadd9"/>
<path d="M645.0 77.8 L658.9 80.0 L672.8 82.3 L686.6 84.4 L700.5 86.6 L714.4 88.7 L728.2 90.7 L742.1 92.8 L756.0 94.7 L769.9 96.6 L783.8 98.4 L797.6 100.1 L811.5 101.8 L825.4 103.4 L839.2 104.9 L853.1 106.4 L867.0 107.7 L880.9 108.9 L894.8 110.0 L908.6 111.0 L922.5 111.9 L936.4 112.7 L950.2 113.3 L964.1 113.9 L978.0 114.2 L991.9 114.5 L1005.8 114.6 L1019.6 114.6 L1033.5 114.4 L1047.4 114.1 L1061.2 113.7 L1075.1 113.1 L1089.0 112.4 L1102.9 111.6 L1116.8 110.7 L1130.6 109.6 L1144.5 108.4 L1158.4 107.2 L1172.2 105.8 L1186.1 104.4 L1200.0 102.8 L1200 186 L645 186z" fill="#9fb8d9"/>
<path d="M645.0 92.1 L658.9 94.4 L672.8 96.6 L686.6 98.8 L700.5 100.9 L714.4 103.0 L728.2 105.0 L742.1 107.0 L756.0 108.9 L769.9 110.8 L783.8 112.6 L797.6 114.3 L811.5 116.0 L825.4 117.6 L839.2 119.1 L853.1 120.5 L867.0 121.9 L880.9 123.2 L894.8 124.4 L908.6 125.6 L922.5 126.6 L936.4 127.6 L950.2 128.4 L964.1 129.2 L978.0 129.9 L991.9 130.4 L1005.8 130.9 L1019.6 131.3 L1033.5 131.5 L1047.4 131.7 L1061.2 131.7 L1075.1 131.6 L1089.0 131.4 L1102.9 131.1 L1116.8 130.6 L1130.6 130.1 L1144.5 129.4 L1158.4 128.6 L1172.2 127.6 L1186.1 126.5 L1200.0 125.3 L1200 186 L645 186z" fill="#9dc0e3"/>
<path d="M645.0 100.2 L658.9 102.1 L672.8 103.9 L686.6 105.7 L700.5 107.5 L714.4 109.2 L728.2 110.8 L742.1 112.4 L756.0 114.0 L769.9 115.5 L783.8 117.0 L797.6 118.4 L811.5 119.8 L825.4 121.1 L839.2 122.4 L853.1 123.6 L867.0 124.7 L880.9 125.9 L894.8 126.9 L908.6 127.9 L922.5 128.8 L936.4 129.7 L950.2 130.5 L964.1 131.3 L978.0 132.0 L991.9 132.6 L1005.8 133.2 L1019.6 133.7 L1033.5 134.2 L1047.4 134.5 L1061.2 134.9 L1075.1 135.1 L1089.0 135.3 L1102.9 135.4 L1116.8 135.4 L1130.6 135.4 L1144.5 135.3 L1158.4 135.1 L1172.2 134.9 L1186.1 134.6 L1200.0 134.2 L1200 186 L645 186z" fill="#a9cbea"/>
<path d="M645.0 118.3 L658.9 119.4 L672.8 120.4 L686.6 121.6 L700.5 122.7 L714.4 123.8 L728.2 125.0 L742.1 126.1 L756.0 127.3 L769.9 128.5 L783.8 129.6 L797.6 130.8 L811.5 131.9 L825.4 133.0 L839.2 134.1 L853.1 135.2 L867.0 136.2 L880.9 137.2 L894.8 138.2 L908.6 139.1 L922.5 140.0 L936.4 140.8 L950.2 141.5 L964.1 142.2 L978.0 142.9 L991.9 143.4 L1005.8 143.9 L1019.6 144.3 L1033.5 144.7 L1047.4 144.9 L1061.2 145.1 L1075.1 145.1 L1089.0 145.1 L1102.9 144.9 L1116.8 144.7 L1130.6 144.3 L1144.5 143.8 L1158.4 143.2 L1172.2 142.5 L1186.1 141.6 L1200.0 140.6 L1200 186 L645 186z" fill="#b7d6f5"/>
<path d="M645.0 132.8 L658.9 133.4 L672.8 134.0 L686.6 134.6 L700.5 135.3 L714.4 136.1 L728.2 136.8 L742.1 137.6 L756.0 138.4 L769.9 139.2 L783.8 140.1 L797.6 140.9 L811.5 141.8 L825.4 142.6 L839.2 143.5 L853.1 144.3 L867.0 145.1 L880.9 145.9 L894.8 146.7 L908.6 147.4 L922.5 148.1 L936.4 148.8 L950.2 149.4 L964.1 150.0 L978.0 150.5 L991.9 151.0 L1005.8 151.5 L1019.6 151.8 L1033.5 152.1 L1047.4 152.3 L1061.2 152.5 L1075.1 152.5 L1089.0 152.5 L1102.9 152.4 L1116.8 152.2 L1130.6 151.9 L1144.5 151.5 L1158.4 151.0 L1172.2 150.4 L1186.1 149.6 L1200.0 148.8 L1200 186 L645 186z" fill="#c5e0fa"/>
<path d="M645.0 146.7 L658.9 146.9 L672.8 147.2 L686.6 147.6 L700.5 148.0 L714.4 148.4 L728.2 148.9 L742.1 149.4 L756.0 149.9 L769.9 150.5 L783.8 151.0 L797.6 151.6 L811.5 152.2 L825.4 152.8 L839.2 153.4 L853.1 154.0 L867.0 154.6 L880.9 155.2 L894.8 155.8 L908.6 156.3 L922.5 156.9 L936.4 157.4 L950.2 157.8 L964.1 158.3 L978.0 158.7 L991.9 159.0 L1005.8 159.3 L1019.6 159.5 L1033.5 159.7 L1047.4 159.8 L1061.2 159.9 L1075.1 159.9 L1089.0 159.8 L1102.9 159.6 L1116.8 159.3 L1130.6 159.0 L1144.5 158.6 L1158.4 158.0 L1172.2 157.4 L1186.1 156.7 L1200.0 155.8 L1200 186 L645 186z" fill="#d8edfc"/>
<path d="M645.0 155.5 L658.9 155.6 L672.8 155.8 L686.6 156.1 L700.5 156.4 L714.4 156.7 L728.2 157.1 L742.1 157.5 L756.0 158.0 L769.9 158.4 L783.8 158.9 L797.6 159.5 L811.5 160.0 L825.4 160.5 L839.2 161.1 L853.1 161.6 L867.0 162.1 L880.9 162.7 L894.8 163.2 L908.6 163.7 L922.5 164.2 L936.4 164.7 L950.2 165.2 L964.1 165.6 L978.0 166.0 L991.9 166.3 L1005.8 166.6 L1019.6 166.9 L1033.5 167.1 L1047.4 167.3 L1061.2 167.4 L1075.1 167.4 L1089.0 167.4 L1102.9 167.3 L1116.8 167.2 L1130.6 166.9 L1144.5 166.6 L1158.4 166.2 L1172.2 165.7 L1186.1 165.1 L1200.0 164.4 L1200 186 L645 186z" fill="#e8f7fd"/>
<path d="M645.0 164.4 L658.9 164.4 L672.8 164.5 L686.6 164.6 L700.5 164.8 L714.4 165.0 L728.2 165.2 L742.1 165.5 L756.0 165.8 L769.9 166.2 L783.8 166.6 L797.6 167.0 L811.5 167.4 L825.4 167.8 L839.2 168.3 L853.1 168.7 L867.0 169.2 L880.9 169.6 L894.8 170.1 L908.6 170.5 L922.5 171.0 L936.4 171.4 L950.2 171.8 L964.1 172.2 L978.0 172.5 L991.9 172.9 L1005.8 173.2 L1019.6 173.5 L1033.5 173.7 L1047.4 173.9 L1061.2 174.1 L1075.1 174.2 L1089.0 174.2 L1102.9 174.2 L1116.8 174.2 L1130.6 174.1 L1144.5 173.9 L1158.4 173.7 L1172.2 173.3 L1186.1 172.9 L1200.0 172.5 L1200 186 L645 186z" fill="#f8fdfe"/>
<rect x="645" y="160" width="555" height="40" fill="url(#fog)"/>
<g mask="url(#gm)"><path d="M768.9 172.0L643.0 176.1M769.0 172.0L643.0 176.2M769.1 172.0L643.0 176.3M769.2 172.0L643.0 176.3M769.3 172.0L643.0 176.4M769.4 172.0L643.0 176.5M769.5 172.0L643.0 176.6M769.6 172.0L643.0 176.7M769.7 172.0L643.0 176.8M769.8 172.0L643.0 176.9M769.9 172.0L643.0 177.0M770.1 172.0L643.0 177.1M770.2 172.0L643.0 177.2M770.3 172.0L643.0 177.3M770.4 172.0L643.0 177.4M770.5 172.0L643.0 177.5M770.6 172.0L643.0 177.7M770.7 172.0L643.0 177.8M770.8 172.0L643.0 177.9M770.9 172.0L643.0 178.1M771.0 172.0L643.0 178.2M771.1 172.0L643.0 178.4M771.2 172.0L643.0 178.6M771.3 172.0L643.0 178.8M771.4 172.0L643.0 178.9M771.5 172.0L643.0 179.1M771.7 172.0L643.0 179.4M771.8 172.0L643.0 179.6M771.9 172.0L643.0 179.8M772.0 172.0L643.0 180.1M772.1 172.0L643.0 180.4M772.2 172.0L643.0 180.7M772.3 172.0L643.0 181.0M772.4 172.0L643.0 181.3M772.5 172.0L643.0 181.7M772.6 172.0L643.0 182.1M772.7 172.0L643.0 182.5M772.8 172.0L643.0 183.0M773.0 172.0L643.0 183.5M773.1 172.0L643.0 184.1M773.2 172.0L643.0 184.7M773.3 172.0L643.0 185.4M773.4 172.0L643.0 186.1M773.5 172.0L643.0 187.0M773.6 172.0L643.0 187.9M773.7 172.0L643.0 189.0M773.8 172.0L643.0 190.3M773.9 172.0L643.0 191.8M774.1 172.0L643.0 193.5M774.2 172.0L643.0 195.5M774.3 172.0L643.0 198.0M774.4 172.0L643.0 201.0M774.5 172.0L643.0 204.8M774.6 172.0L643.0 209.8M774.7 172.0L643.0 216.6M774.8 172.0L643.0 226.4M774.9 172.0L643.0 241.6M775.1 172.0L643.0 268.5M775.2 172.0L643.0 329.6M775.3 172.0L684.0 468.0M775.4 172.0L841.2 468.0M775.5 172.0L998.6 468.0M775.6 172.0L1156.2 468.0M775.7 172.0L1202.0 406.4M775.8 172.0L1202.0 353.2M775.9 172.0L1202.0 319.6M776.1 172.0L1202.0 296.5M776.2 172.0L1202.0 279.7M776.3 172.0L1202.0 266.8M776.4 172.0L1202.0 256.7M776.5 172.0L1202.0 248.5M776.6 172.0L1202.0 241.7M776.7 172.0L1202.0 236.0M776.9 172.0L1202.0 231.2M777.0 172.0L1202.0 227.1M777.1 172.0L1202.0 223.4M777.2 172.0L1202.0 220.3M777.3 172.0L1202.0 217.5M777.4 172.0L1202.0 215.0M777.5 172.0L1202.0 212.7M777.7 172.0L1202.0 210.7M777.8 172.0L1202.0 208.8M777.9 172.0L1202.0 207.2M778.0 172.0L1202.0 205.6M778.1 172.0L1202.0 204.2M778.2 172.0L1202.0 202.9M778.3 172.0L1202.0 201.7M778.5 172.0L1202.0 200.6M778.6 172.0L1202.0 199.6M778.7 172.0L1202.0 198.6M778.8 172.0L1202.0 197.7M778.9 172.0L1202.0 196.9M779.0 172.0L1202.0 196.1M779.2 172.0L1202.0 195.4M779.3 172.0L1202.0 194.7M779.4 172.0L1202.0 194.0M779.5 172.0L1202.0 193.4M779.6 172.0L1202.0 192.8M779.7 172.0L1202.0 192.2M779.9 172.0L1202.0 191.7M780.0 172.0L1202.0 191.2M780.1 172.0L1202.0 190.7M780.2 172.0L1202.0 190.3M780.3 172.0L1202.0 189.8M780.5 172.0L1202.0 189.4M780.6 172.0L1202.0 189.0M780.7 172.0L1202.0 188.6M780.8 172.0L1202.0 188.3M780.9 172.0L1202.0 187.9M781.0 172.0L1202.0 187.6M781.2 172.0L1202.0 187.3M781.3 172.0L1202.0 186.9M781.4 172.0L1202.0 186.6M781.5 172.0L1202.0 186.4M781.6 172.0L1202.0 186.1M781.8 172.0L1202.0 185.8M781.9 172.0L1202.0 185.6M782.0 172.0L1202.0 185.3M782.1 172.0L1202.0 185.1M782.2 172.0L1202.0 184.8M782.4 172.0L1202.0 184.6M782.5 172.0L1202.0 184.4M782.6 172.0L1202.0 184.2M782.7 172.0L1202.0 184.0M782.8 172.0L1202.0 183.8M783.0 172.0L1202.0 183.6M783.1 172.0L1202.0 183.4M783.2 172.0L1202.0 183.2M783.3 172.0L1202.0 183.1M783.5 172.0L1202.0 182.9M783.6 172.0L1202.0 182.7M783.7 172.0L1202.0 182.6M783.8 172.0L1202.0 182.4M783.9 172.0L1202.0 182.3M784.1 172.0L1202.0 182.1M784.2 172.0L1202.0 182.0M784.3 172.0L1202.0 181.8M784.4 172.0L1202.0 181.7M784.6 172.0L1202.0 181.6M784.7 172.0L1202.0 181.4M784.8 172.0L1202.0 181.3M784.9 172.0L1202.0 181.2M785.1 172.0L1202.0 181.1M785.2 172.0L1202.0 180.9M785.3 172.0L1202.0 180.8M785.4 172.0L1202.0 180.7M785.5 172.0L1202.0 180.6M785.7 172.0L1202.0 180.5M785.8 172.0L1202.0 180.4M785.9 172.0L1202.0 180.3M1202.0 395.0L1029.3 468.0M1202.0 317.9L661.2 468.0M1202.0 280.3L643.0 395.9M1202.0 258.1L643.0 350.2M1202.0 243.4L643.0 320.0M1202.0 232.9L643.0 298.5M1202.0 225.1L643.0 282.5M1202.0 219.1L643.0 270.1M1202.0 214.3L643.0 260.2M1202.0 210.3L643.0 252.1M1202.0 207.0L643.0 245.4M1202.0 204.3L643.0 239.7M1202.0 201.9L643.0 234.8M1202.0 199.9L643.0 230.6M1202.0 198.1L643.0 226.9M1202.0 196.5L643.0 223.6M1202.0 195.1L643.0 220.7M1202.0 193.8L643.0 218.2M1202.0 192.7L643.0 215.8M1202.0 191.7L643.0 213.7M1202.0 190.7L643.0 211.8M1202.0 189.9L643.0 210.1M1202.0 189.1L643.0 208.5M1202.0 188.4L643.0 207.0M1202.0 187.7L643.0 205.7M1202.0 187.1L643.0 204.4M1202.0 186.6L643.0 203.3M1202.0 186.0L643.0 202.2M1202.0 185.5L643.0 201.2M1202.0 185.1L643.0 200.2M1202.0 184.6L643.0 199.3M1202.0 184.2L643.0 198.5M1202.0 183.9L643.0 197.7M1202.0 183.5L643.0 197.0M1202.0 183.2L643.0 196.3M1202.0 182.8L643.0 195.6M1202.0 182.5L643.0 195.0M1202.0 182.2L643.0 194.4M1202.0 182.0L643.0 193.8M1202.0 181.7L643.0 193.3M1202.0 181.5L643.0 192.8M1202.0 181.2L643.0 192.3M1202.0 181.0L643.0 191.8M1202.0 180.8L643.0 191.4M1202.0 180.6L643.0 191.0M1202.0 180.4L643.0 190.6M1202.0 180.2L643.0 190.2M1202.0 180.0L643.0 189.8M1202.0 179.8L643.0 189.4M1202.0 179.7L643.0 189.1M1202.0 179.5L643.0 188.8M1202.0 179.3L643.0 188.5M1202.0 179.2L643.0 188.1M1202.0 179.1L643.0 187.9M1202.0 178.9L643.0 187.6M1202.0 178.8L643.0 187.3M1202.0 178.7L643.0 187.0M1202.0 178.5L643.0 186.8M1202.0 178.4L643.0 186.5M1202.0 178.3L643.0 186.3M1202.0 178.2L643.0 186.1M1202.0 178.1L643.0 185.8M1202.0 178.0L643.0 185.6M1202.0 177.9L643.0 185.4M1202.0 177.8L643.0 185.2M1202.0 177.7L643.0 185.0M1202.0 177.6L643.0 184.8M1202.0 177.5L643.0 184.6M1202.0 177.4L643.0 184.4M1202.0 177.3L643.0 184.3M1202.0 177.2L643.0 184.1M1202.0 177.1L643.0 183.9M1202.0 177.1L643.0 183.8M1202.0 177.0L643.0 183.6M1202.0 176.9L643.0 183.4M1202.0 176.8L643.0 183.3M1202.0 176.8L643.0 183.2M1202.0 176.7L643.0 183.0M1202.0 176.6L643.0 182.9M1202.0 176.6L643.0 182.7M1202.0 176.5L643.0 182.6M1202.0 176.4L643.0 182.5M1202.0 176.4L643.0 182.4M1202.0 176.3L643.0 182.2M1202.0 176.3L643.0 182.1M1202.0 176.2L643.0 182.0M1202.0 176.1L643.0 181.9M1202.0 176.1L643.0 181.8M1202.0 176.0L643.0 181.7M1202.0 176.0L643.0 181.6M1202.0 175.9L643.0 181.4M1202.0 175.9L643.0 181.3M1202.0 175.8L643.0 181.2M1202.0 175.8L643.0 181.1M1202.0 175.7L643.0 181.0M1202.0 175.7L643.0 181.0M1202.0 175.7L643.0 180.9M1202.0 175.6L643.0 180.8M1202.0 175.6L643.0 180.7M1202.0 175.5L643.0 180.6M1202.0 175.5L643.0 180.5M1202.0 175.4L643.0 180.4M1202.0 175.4L643.0 180.3M1202.0 175.4L643.0 180.3M1202.0 175.3L643.0 180.2M1202.0 175.3L643.0 180.1M1202.0 175.3L643.0 180.0M1202.0 175.2L643.0 180.0M1202.0 175.2L643.0 179.9M1202.0 175.1L643.0 179.8M1202.0 175.1L643.0 179.7" stroke="#ffffff" stroke-opacity="0.115" stroke-width="1.1" fill="none"/></g>
<g clip-path="url(#pc)">
<rect x="645" y="193" width="555" height="280" fill="url(#pov)"/>
<path d="M645.0 60.0 L658.9 60.0 L672.8 60.0 L686.6 60.0 L700.5 60.0 L714.4 60.0 L728.2 60.0 L742.1 60.0 L756.0 60.0 L769.9 60.0 L783.8 60.0 L797.6 60.0 L811.5 60.0 L825.4 60.0 L839.2 60.0 L853.1 60.0 L867.0 60.0 L880.9 60.0 L894.8 60.0 L908.6 60.0 L922.5 60.0 L936.4 60.0 L950.2 60.0 L964.1 60.0 L978.0 60.0 L991.9 60.0 L1005.8 60.0 L1019.6 60.0 L1033.5 60.0 L1047.4 60.0 L1061.2 60.0 L1075.1 60.0 L1089.0 60.0 L1102.9 60.0 L1116.8 60.0 L1130.6 60.0 L1144.5 60.0 L1158.4 60.0 L1172.2 60.0 L1186.1 60.0 L1200.0 60.0 L1200 186 L645 186z" fill="#7b8a98"/>
<path d="M645.0 116.8 L658.9 118.4 L672.8 120.0 L686.6 121.5 L700.5 123.0 L714.4 124.4 L728.2 125.8 L742.1 127.1 L756.0 128.4 L769.9 129.7 L783.8 130.9 L797.6 132.0 L811.5 133.1 L825.4 134.2 L839.2 135.2 L853.1 136.2 L867.0 137.1 L880.9 138.0 L894.8 138.8 L908.6 139.6 L922.5 140.4 L936.4 141.1 L950.2 141.7 L964.1 142.3 L978.0 142.8 L991.9 143.3 L1005.8 143.8 L1019.6 144.2 L1033.5 144.5 L1047.4 144.8 L1061.2 145.1 L1075.1 145.2 L1089.0 145.4 L1102.9 145.5 L1116.8 145.5 L1130.6 145.5 L1144.5 145.5 L1158.4 145.3 L1172.2 145.2 L1186.1 145.0 L1200.0 144.7 L1200 186 L645 186z" fill="#8a9aa2"/>
<path d="M645.0 143.9 L658.9 144.8 L672.8 145.7 L686.6 146.5 L700.5 147.3 L714.4 148.1 L728.2 148.9 L742.1 149.6 L756.0 150.3 L769.9 151.0 L783.8 151.7 L797.6 152.3 L811.5 152.9 L825.4 153.5 L839.2 154.1 L853.1 154.6 L867.0 155.2 L880.9 155.7 L894.8 156.1 L908.6 156.6 L922.5 157.0 L936.4 157.4 L950.2 157.8 L964.1 158.2 L978.0 158.5 L991.9 158.8 L1005.8 159.1 L1019.6 159.4 L1033.5 159.7 L1047.4 159.9 L1061.2 160.1 L1075.1 160.3 L1089.0 160.5 L1102.9 160.6 L1116.8 160.7 L1130.6 160.8 L1144.5 160.9 L1158.4 161.0 L1172.2 161.0 L1186.1 161.0 L1200.0 161.0 L1200 186 L645 186z" fill="#93a5a6"/>
<path d="M645.0 161.3 L658.9 161.8 L672.8 162.3 L686.6 162.9 L700.5 163.5 L714.4 164.0 L728.2 164.6 L742.1 165.2 L756.0 165.7 L769.9 166.3 L783.8 166.9 L797.6 167.4 L811.5 168.0 L825.4 168.5 L839.2 169.1 L853.1 169.6 L867.0 170.1 L880.9 170.6 L894.8 171.1 L908.6 171.6 L922.5 172.0 L936.4 172.5 L950.2 172.9 L964.1 173.3 L978.0 173.6 L991.9 174.0 L1005.8 174.3 L1019.6 174.5 L1033.5 174.8 L1047.4 175.0 L1061.2 175.2 L1075.1 175.3 L1089.0 175.4 L1102.9 175.5 L1116.8 175.5 L1130.6 175.5 L1144.5 175.4 L1158.4 175.3 L1172.2 175.1 L1186.1 174.9 L1200.0 174.7 L1200 186 L645 186z" fill="#a3aaa9"/>
<rect x="645" y="170" width="555" height="24" fill="url(#pfog)"/>
</g>
<path d="M927 127.200V196" stroke="url(#seam)" stroke-width="2.600"/>
<path d="M926.500 196V312" stroke="#7a6c64" stroke-width="2.200" opacity="0.650"/>
<path d="M1080.700 135.300 1073.600 196" stroke="url(#seam)" stroke-width="2.600"/>
<path d="M1073.600 196 1062.800 288" stroke="#7a6c64" stroke-width="2" opacity="0.650"/>
<g fill="none" stroke="#e2e2e2" stroke-width="1.150">
<path d="M719.500 236.500 735.500 235.500 736.500 249.500 720.500 250.500z"/>
<path d="M935.500 223 944.800 222.300 945.200 232.800 935.800 233.400z" stroke-width="1"/>
<path d="M1075.600 214 1082 213.400 1082 221.800 1075.600 222.400z" stroke-width="1"/>
</g>
<g fill="#f4f4f4" font-family="'Liberation Sans',sans-serif">
<text x="739.500" y="246" font-size="15.500">A</text>
<text x="947.500" y="229.500" font-size="11.500">B</text>
<text x="1083.500" y="218.500" font-size="8">C</text>
</g>
<ellipse cx="702.300" cy="442" rx="17.300" ry="12.800" transform="rotate(-12 702.300 442)" fill="none" stroke="#ffffff" stroke-width="2.400"/>
<defs>
<linearGradient id="gy" x1="0" y1="0" x2="1" y2="0"><stop offset="0" stop-color="#6eb024"/><stop offset="0.5" stop-color="#92dc38"/><stop offset="1" stop-color="#7cc42c"/></linearGradient>
<linearGradient id="gl" x1="0" y1="0" x2="0" y2="1"><stop offset="0" stop-color="#d2d2d2"/><stop offset="0.5" stop-color="#b4b4b4"/><stop offset="1" stop-color="#787878"/></linearGradient>
<linearGradient id="gb" x1="0" y1="0" x2="1" y2="0"><stop offset="0" stop-color="#b8b8b8"/><stop offset="0.45" stop-color="#ffffff"/><stop offset="1" stop-color="#c8c8c8"/></linearGradient>
</defs>
<g>
<path d="M1119 112.200Q1117.600 119 1119.400 126.400L1140.200 118z" fill="url(#gl)"/>
<circle cx="1140.200" cy="110.600" r="4.200" fill="#3b64b4"/>
<path d="M1142.200 86.600Q1148.800 84.400 1155.800 86.600L1148.900 107z" fill="url(#gy)"/>
<path d="M1149.100 123 1143.600 140.600Q1149.200 143.600 1154.800 140.600z" fill="url(#gb)"/>
<path d="M1141.600 109.200 1145.200 110.900V124.600L1141.600 122.600z" fill="#5e666c"/>
<path d="M1141.600 109.200 1153.800 108.800 1157.600 110.900H1145.200z" fill="#7e868a"/>
<rect x="1145.200" y="110.900" width="12.400" height="13.700" fill="#fbfbfb"/>
<path d="M1157.600 114.800 1170.600 107.600Q1176.400 110 1174.600 118z" fill="#dc4428"/>
<path d="M1152.600 118.800 1162.200 117.600 1156.600 128.200z" fill="#2a2e34"/>
<ellipse cx="1165.100" cy="126.400" rx="7.900" ry="9.300" transform="rotate(18 1165.100 126.400)" fill="#fdfdfd"/>
<g fill="#ffffff" font-family="'DejaVu Sans','Liberation Sans',sans-serif" font-weight="bold" font-size="10">
<text x="1145.600" y="81.500">y</text><text x="1131.200" y="110">z</text><text x="1176.500" y="115.200">x</text></g>
</g>
<path d="M1135.400 161.400 1125.400 165.600 1135.400 169.800M1125.400 165.600H1135.400" stroke="#c0c4c2" stroke-width="1" fill="none" opacity="0.85"/>
<text x="1138.500" y="169.500" font-size="11" fill="#c4c8c6" opacity="0.85" font-family="'DejaVu Sans','Liberation Sans',sans-serif" letter-spacing="0.3">Persp</text>
<rect x="1199" y="65" width="1" height="401" fill="#2a3038" opacity="0.550"/>
</svg>
<div id="bline"></div>
</div>
</body>
</html>
